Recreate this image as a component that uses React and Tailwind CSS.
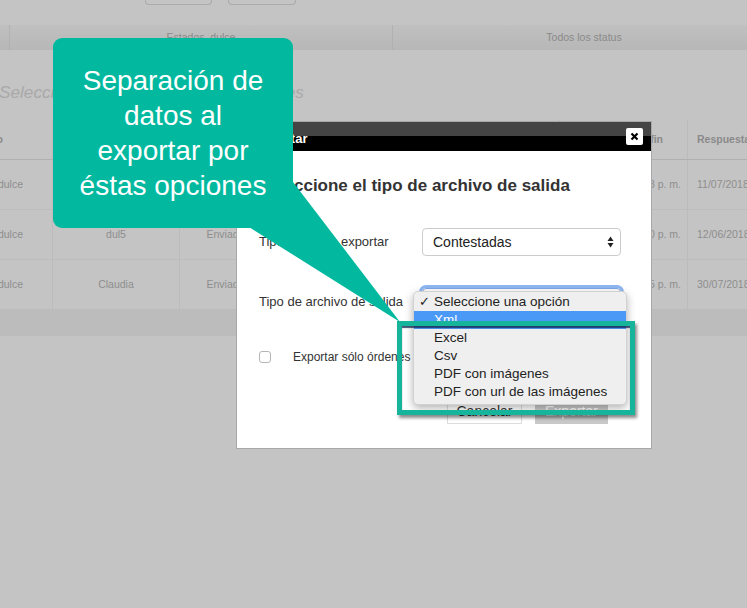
export default function App() {
  const rows = [
    { c2: "", c3: "", c5: "11/07/2018 12:43 p. m.", c6: "11/07/2018 05:12" },
    { c2: "dul5", c3: "Enviada", c5: "12/06/2018 12:50 p. m.", c6: "12/06/2018" },
    { c2: "Claudia", c3: "Enviada", c5: "30/07/2018 01:15 p. m.", c6: "30/07/2018" },
  ];

  const options = ["Xml", "Excel", "Csv", "PDF con imágenes", "PDF con url de las imágenes"];

  return (
    <div
      className="relative w-[747px] h-[608px] overflow-hidden bg-[#c4c4c4] text-[#8e8e8e]"
      style={{ fontFamily: '"Liberation Sans", Arial, sans-serif' }}
    >
      {/* page behind the overlay */}
      <div className="h-[25px] flex pl-[145px] gap-[16px]">
        <div className="w-[67px] h-[5px] border border-t-0 border-[#ababab] rounded-b-[4px]" />
        <div className="w-[68px] h-[5px] border border-t-0 border-[#ababab] rounded-b-[4px]" />
      </div>
      <div className="h-[25px] flex bg-gradient-to-b from-[#c0c0c0] to-[#b7b7b7] text-[10.5px] text-[#8a8a8a]">
        <div className="w-[10px] shrink-0 border-r border-[#b1b1b1]" />
        <div className="w-[383px] shrink-0 border-r border-[#b1b1b1] flex items-center justify-center">Estados_dulce</div>
        <div className="w-[382px] shrink-0 flex items-center justify-center">Todos los status</div>
      </div>
      <div className="h-[70px] pt-[32px]">
        <p className="ml-[-1px] text-[17.2px] leading-[20px] italic text-[#a9a9a9] whitespace-nowrap">
          Seleccione una o varias de sus órdenes
        </p>
      </div>

      <div className="text-[10.5px]">
        <div className="h-[40px] flex border-b border-[#b0b0b0] font-bold text-[#8a8a8a]">
          <div className="w-[53px] shrink-0 flex items-center justify-end pr-[49px] border-r border-[#bbbbbb] whitespace-nowrap">Folio</div>
          <div className="w-[127px] shrink-0 border-r border-[#bbbbbb]" />
          <div className="w-[92px] shrink-0 border-r border-[#bbbbbb]" />
          <div className="w-[288px] shrink-0 border-r border-[#bbbbbb]" />
          <div className="w-[128px] shrink-0 flex items-center justify-end pr-[24px] border-r border-[#bbbbbb] whitespace-nowrap">Fecha de fin</div>
          <div className="flex-1 flex items-center pl-[9px] whitespace-nowrap">Respuesta</div>
        </div>
        {rows.map((r, i) => (
          <div key={i} className="h-[50px] flex border-b border-[#bcbcbc]">
            <div className="w-[53px] shrink-0 flex items-center justify-end pr-[29px] border-r border-[#bbbbbb] whitespace-nowrap">Estados_dulce</div>
            <div className="w-[127px] shrink-0 flex items-center justify-center border-r border-[#bbbbbb]">{r.c2}</div>
            <div className="w-[92px] shrink-0 flex items-center justify-center border-r border-[#bbbbbb]">{r.c3}</div>
            <div className="w-[288px] shrink-0 border-r border-[#bbbbbb]" />
            <div className="w-[128px] shrink-0 flex items-center justify-end pr-[6px] border-r border-[#bbbbbb] whitespace-nowrap">{r.c5}</div>
            <div className="flex-1 flex items-center pl-[9px] whitespace-nowrap">{r.c6}</div>
          </div>
        ))}
        <div className="h-[26px] bg-[#bcbcbc]" />
      </div>

      {/* modal */}
      <div className="absolute left-[236px] top-[121px] w-[416px] h-[328px] bg-white border border-[#a8a8a8] text-[#333]">
        <div className="h-[29px] flex justify-between bg-[linear-gradient(#444444_50%,#000000_50%)]">
          <span className="pl-[17px] pt-[9px] leading-[16px] text-[13px] font-bold text-white">Exportar</span>
          <div className="mt-[6px] mr-[8px] w-[17px] h-[17px] bg-white rounded-[2px] flex items-center justify-center">
            <svg width="9" height="9" viewBox="0 0 9 9">
              <path d="M1.5 1.5 L7.5 7.5 M7.5 1.5 L1.5 7.5" stroke="#000" strokeWidth="2.2" />
            </svg>
          </div>
        </div>
        <div className="pl-[22px] pr-[30px]">
          <h2 className="mt-[26px] text-[17px] leading-[18px] font-bold text-[#333] whitespace-nowrap">
            Seleccione el tipo de archivo de salida
          </h2>
          <div className="mt-[33px] flex items-center text-[13px]">
            <span className="w-[163px] whitespace-nowrap">Tipo de info a exportar</span>
            <div className="w-[199px] h-[28px] border border-[#cccccc] rounded-[4px] flex items-center justify-between pl-[10px] pr-[6px] text-[14px] text-[#222]">
              <span>Contestadas</span>
              <svg width="7" height="12" viewBox="0 0 7 12">
                <path d="M3.5 0.5 L6.5 5 L0.5 5 Z M0.5 7 L6.5 7 L3.5 11.5 Z" fill="#222" />
              </svg>
            </div>
          </div>
          <div className="mt-[32px] flex items-center text-[13px]">
            <span className="w-[163px] whitespace-nowrap">Tipo de archivo de salida</span>
            <div className="w-[199px] h-[28px] border border-[#7aa7ea] rounded-[4px] shadow-[0_0_0_3px_#8db6f2]" />
          </div>
          <div className="mt-[32px] flex items-center text-[12px]">
            <div className="w-[12px] h-[12px] border border-[#b5b5b5] rounded-[3px] bg-white" />
            <span className="ml-[22px] whitespace-nowrap">Exportar sólo órdenes con respuesta</span>
          </div>
          <div className="mt-[33px] flex justify-end gap-[13px] pr-[13px] text-[14px]">
            <button className="w-[75px] h-[25px] border border-[#dddddd] bg-white text-[#333]">Cancelar</button>
            <button className="w-[73px] h-[25px] bg-[#c8c8c8] text-white">Exportar</button>
          </div>
        </div>

        {/* open select menu */}
        <div className="absolute left-[176px] top-[169px] w-[214px] pt-[1px] pb-[3px] bg-[#efefef] rounded-[5px] border border-[#d2d2d2] shadow-[0_3px_8px_rgba(0,0,0,0.3)] text-[13.5px] text-[#222]">
          <div className="h-[18px] leading-[18px] flex">
            <span className="w-[20px] pl-[5px] text-[13px]">✓</span>
            <span>Seleccione una opción</span>
          </div>
          {options.map((o, i) => (
            <div
              key={o}
              className={
                i === 0
                  ? "h-[18px] leading-[18px] pl-[20px] bg-[#4b99f7] text-white"
                  : "h-[18px] leading-[18px] pl-[20px]"
              }
            >
              {o}
            </div>
          ))}
        </div>
      </div>

      {/* highlight box */}
      <div className="absolute left-[397px] top-[321px] w-[238px] h-[94px] border-[5px] border-[#15b49b] shadow-[inset_0_2px_1px_rgba(20,40,80,0.8),2px_3px_3px_rgba(0,0,0,0.45)]" />

      {/* callout */}
      <svg className="absolute left-0 top-0" width="747" height="608">
        <polygon points="241,222 293,182 400,322" fill="#02b99f" />
      </svg>
      <div className="absolute left-[53px] top-[38px] w-[240px] h-[190px] rounded-[9px] bg-[#02b99f] flex items-center justify-center text-center text-white text-[28px] leading-[35px]">
        <p>
          Separación de
          <br />
          datos al
          <br />
          exportar por
          <br />
          éstas opciones
        </p>
      </div>
    </div>
  );
}
